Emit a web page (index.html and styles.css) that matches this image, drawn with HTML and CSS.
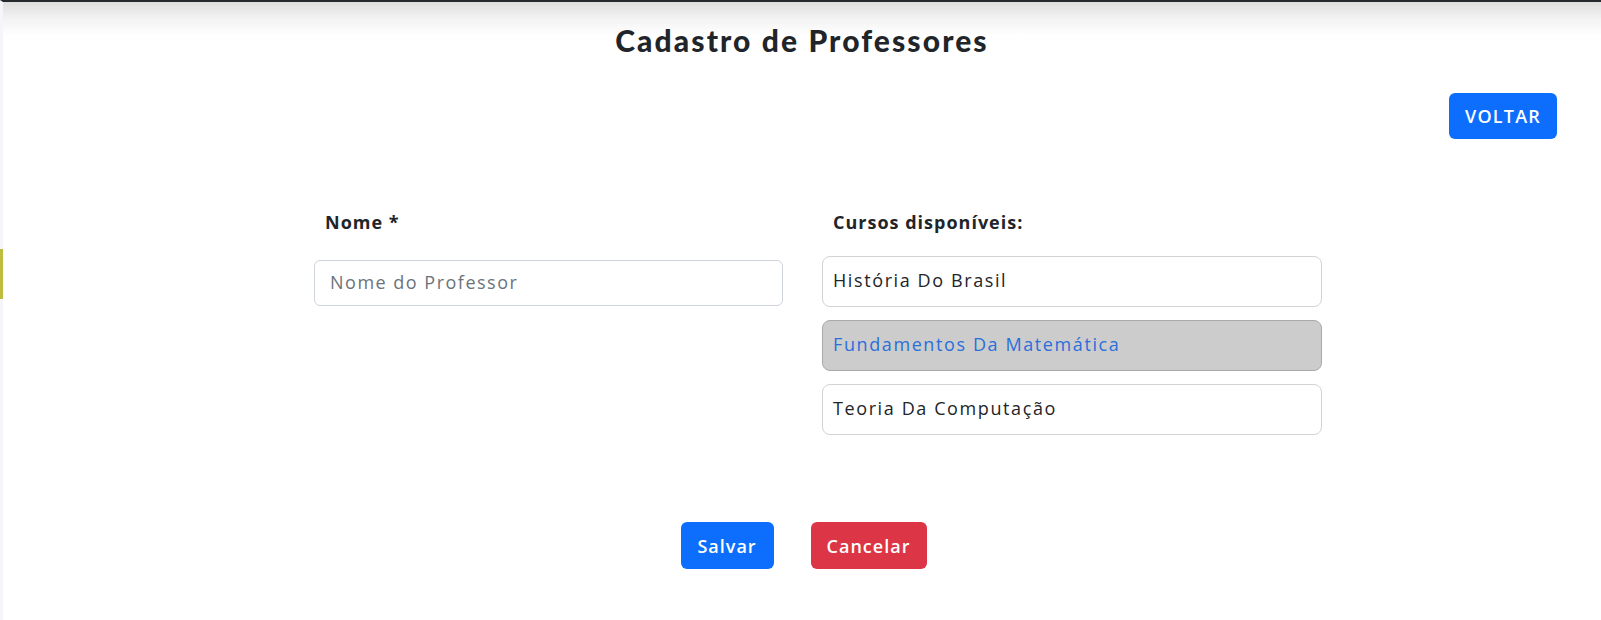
FILE: index.html
```html
<!DOCTYPE html>
<html lang="pt-BR">
<head>
<meta charset="utf-8">
<title>Cadastro de Professores</title>
<link rel="stylesheet" href="styles.css">
</head>
<body>
<div class="page">
  <div class="side-mark"></div>
  <header class="header">
    <h1 class="title">Cadastro de Professores</h1>
  </header>
  <div class="actions-top">
    <button class="btn btn-primary btn-voltar">VOLTAR</button>
  </div>
  <form class="form">
    <div class="col col-left">
      <label class="label">Nome *</label>
      <input class="input" type="text" placeholder="Nome do Professor">
    </div>
    <div class="col col-right">
      <div class="label">Cursos disponíveis:</div>
      <ul class="courses">
        <li class="course">História Do Brasil</li>
        <li class="course course-selected">Fundamentos Da Matemática</li>
        <li class="course">Teoria Da Computação</li>
      </ul>
    </div>
  </form>
  <div class="actions-bottom">
    <button class="btn btn-primary btn-save">Salvar</button>
    <button class="btn btn-danger btn-cancel">Cancelar</button>
  </div>
</div>
</body>
</html>
```

FILE: styles.css
```css
html, body {
  margin: 0;
  padding: 0;
  background: #fff;
}
body {
  font-family: "Open Sans", Roboto, sans-serif;
  color: #212529;
}
.page {
  position: relative;
  min-height: 620px;
  box-sizing: border-box;
  border-top: 2px solid #26292d;
  border-left: 3px solid #f4f6f9;
  background: linear-gradient(#dedede 0px, #f4f4f4 18px, #ffffff 34px) no-repeat;
  background-size: 100% 34px;
}
.side-mark {
  position: absolute;
  left: -3px;
  top: 247px;
  width: 3px;
  height: 50px;
  background: #bdbd3f;
}
.header {
  padding-top: 20px;
  text-align: center;
}
.title {
  margin: 0;
  font-family: Lato, sans-serif;
  font-weight: 900;
  font-size: 30px;
  line-height: 36px;
  letter-spacing: 2.1px;
  color: #212529;
}
.actions-top {
  display: flex;
  justify-content: flex-end;
  padding-right: 44px;
  margin-top: 35px;
}
.btn {
  border: none;
  border-radius: 6px;
  color: #fff;
  font-family: "Open Sans", sans-serif;
  font-size: 18px;
  font-weight: 600;
  letter-spacing: 1px;
  cursor: pointer;
}
.btn-primary { background: #0d6efd; }
.btn-danger { background: #dc3545; }
.btn-voltar {
  width: 108px;
  height: 46px;
  letter-spacing: 1.2px;
}
.form {
  display: flex;
  margin: 71px 0 0 311px;
  gap: 39px;
}
.col { display: flex; flex-direction: column; }
.col-left { width: 469px; }
.col-right { width: 500px; }
.label {
  display: block;
  padding-left: 11px;
  font-size: 18px;
  line-height: 24px;
  font-weight: 700;
  letter-spacing: 1px;
}
.input {
  margin-top: 26px;
  height: 46px;
  box-sizing: border-box;
  border: 1px solid #cfd4da;
  border-radius: 6px;
  padding: 0 15px 3px;
  font-family: "Open Sans", sans-serif;
  font-size: 18px;
  letter-spacing: 1.5px;
  color: #212529;
  outline: none;
}
.input::placeholder { color: #6c737a; }
.courses {
  list-style: none;
  margin: 22px 0 0;
  padding: 0;
  display: flex;
  flex-direction: column;
  gap: 13px;
}
.course {
  height: 51px;
  box-sizing: border-box;
  border: 1px solid #d2d2d2;
  border-radius: 8px;
  padding: 0 10px 3px;
  display: flex;
  align-items: center;
  font-size: 18px;
  font-weight: 500;
  letter-spacing: 1.6px;
  color: #212529;
}
.course-selected {
  background: #cccccc;
  border-color: #a9a9a9;
  color: #2a6fdb;
}
.actions-bottom {
  display: flex;
  justify-content: center;
  gap: 37px;
  margin-top: 87px;
  padding-left: 3px;
}
.btn-save { width: 93px; height: 47px; }
.btn-cancel { width: 116px; height: 47px; }
```
